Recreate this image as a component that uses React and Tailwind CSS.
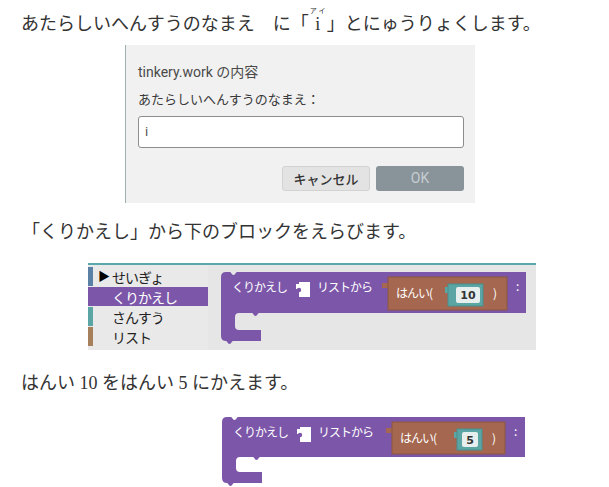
import React from 'react'

const jp = "font-['Noto_Sans_CJK_JP','Noto_Sans',sans-serif]"

// Blockly "くりかえし ... リストから はんい( n ) :" block, drawn as svg
const BLOCK_A = { W: 305, H1: 41, M: 17, A: 11, tab: 161, bx: 167, bw: 119, tx: 227, tw: 35, fx: 235, fw: 24, px: 272, cx: 295, num: '10' }
const BLOCK_B = { W: 303, H1: 40, M: 15, A: 11, tab: 164, bx: 170, bw: 113, tx: 235, tw: 25, fx: 240, fw: 16, px: 270, cx: 292, num: '5' }

function LoopBlock({ g }) {
  const { W, H1, M, A } = g
  const B = H1 + M + A
  const S = 14
  const d = `M0,5 Q0,0 5,0 H9 C10.5,0 10.5,3 12.5,3 C14.5,3 14.5,0 16,0 H${W} V${H1} H38 C36.5,${H1} 36.5,${H1 + 3} 34.5,${H1 + 3} C32.5,${H1 + 3} 32.5,${H1} 31,${H1} H${S + 4} Q${S},${H1} ${S},${H1 + 4} V${H1 + M - 4} Q${S},${H1 + M} ${S + 4},${H1 + M} H40 V${B} H12 C10.5,${B} 10.5,${B + 3} 8.5,${B + 3} C6.5,${B + 3} 6.5,${B} 5,${B} Q0,${B} 0,${B - 5} Z`
  const by = 5
  const bh = H1 - 8
  const ty = by + 7
  const th = bh - 11
  return (
    <svg width={W + 2} height={B + 4} className="block">
      <path d={d} fill="#7c57a9" />
      <text x="11" y="20" className={`${jp} fill-white text-[12px] tracking-[-1px]`}>くりかえし</text>
      {/* empty variable slot */}
      <rect x="78" y="10" width="11" height="15" fill="#fff" />
      <rect x="75" y="12" width="3" height="5" fill="#fff" />
      <circle cx="78" cy="18" r="2.2" fill="#7c57a9" />
      <text x="96" y="20" className={`${jp} fill-white text-[12px] tracking-[-1px]`}>リストから</text>
      {/* はんい block */}
      <rect x={g.tab} y="11" width={g.bx - g.tab} height="5" fill="#a5674f" />
      <rect x={g.bx} y={by} width={g.bw} height={bh} fill="#a5674f" stroke="#8c5641" strokeWidth="1" />
      <text x={g.bx + 8} y={by + 21} className={`${jp} fill-white text-[12px] tracking-[-1px]`}>はんい(</text>
      <rect x={g.tx - 3} y={ty + 3} width="3" height="6" fill="#5ba5a5" />
      <rect x={g.tx} y={ty} width={g.tw} height={th} fill="#5ba5a5" stroke="#4b9090" strokeWidth="1" />
      <rect x={g.fx} y={ty + 3} width={g.fw} height={th - 6} rx="2" fill="#e6eeee" />
      <text x={g.fx + g.fw / 2} y={ty + th / 2 + 4} textAnchor="middle" className="font-['DejaVu_Sans',sans-serif] font-bold fill-[#333] text-[11px]">{g.num}</text>
      <text x={g.px} y={by + 21} className={`${jp} fill-white text-[12px]`}>)</text>
      <text x={g.cx} y="19" className={`${jp} fill-white text-[12px]`}>:</text>
    </svg>
  )
}

function PromptDialog() {
  return (
    <div className="ml-[125px] w-[350px] h-[158px] bg-[#f1f1f1] border-l border-[#9fb0b0] pl-[12px] pr-[11px] pt-[18px] font-['Roboto','Noto_Sans_CJK_JP',sans-serif]">
      <div className="text-[14px] leading-[18px] text-[#4a4a4a]">tinkery.work の内容</div>
      <div className={`${jp} mt-[9px] text-[13px] leading-[18px] text-[#3a3a3a]`}>あたらしいへんすうのなまえ：</div>
      <div className="mt-[8px] h-[32px] bg-white border border-[#8d8d8d] rounded-[3px] flex items-center px-[6px] text-[13px] text-[#555]">i</div>
      <div className="mt-[18px] flex justify-end gap-[6px]">
        <div className={`${jp} w-[88px] h-[25px] rounded-[3px] bg-[#e3e3e3] border border-[#d2d2d2] flex items-center justify-center text-[13px] font-medium text-[#333]`}>キャンセル</div>
        <div className="w-[88px] h-[25px] rounded-[3px] bg-[#89949a] flex items-center justify-center text-[14px] text-[#c6cdd1]">OK</div>
      </div>
    </div>
  )
}

const CATS = [
  { label: 'せいぎょ', color: '#5b80a5', arrow: true },
  { label: 'くりかえし', color: '#7c57a9', selected: true },
  { label: 'さんすう', color: '#5ba5a5' },
  { label: 'リスト', color: '#a5805b' },
]

function BlockPalette() {
  return (
    <div className="ml-[88px] w-[448px] h-[87px] border-t-2 border-[#5aa7ad] flex bg-[#e6e6e6]">
      <div className="w-[120px] bg-[#e9e9e9] pt-[2px] flex flex-col gap-[1px]">
        {CATS.map((c) => (
          <div
            key={c.label}
            className={`h-[19px] flex items-center ${c.selected ? 'bg-[#7c57a9] text-white' : 'text-[#222]'}`}
          >
            <div className="w-[5px] h-full" style={{ background: c.color }} />
            <span className="w-[19px] pl-[5px] text-[12px] leading-none text-black">{c.arrow ? '▶' : ''}</span>
            <span className={`${jp} text-[14px] tracking-[-1px] leading-none`}>{c.label}</span>
          </div>
        ))}
      </div>
      <div className="flex-1 pl-[13px] pt-[7px]">
        <LoopBlock g={BLOCK_A} />
      </div>
    </div>
  )
}

export default function App() {
  return (
    <div className="w-[609px] h-[487px] bg-white overflow-hidden text-[#333] font-['Liberation_Serif','Noto_Sans_CJK_JP',serif]">
      <p className="h-[45px] pt-[14px] pl-[21px] text-[18px] leading-[20px]">
        あたらしいへんすうのなまえ　に「
        <ruby>
          <span className="inline-block w-[18px] text-center">i</span>
          <rt className={`${jp} text-[7px] leading-none`}>アイ</rt>
        </ruby>
        」とにゅうりょくします。
      </p>
      <PromptDialog />
      <p className="mt-[19px] pl-[22px] text-[18px] leading-[20px]">「くりかえし」から下のブロックをえらびます。</p>
      <div className="mt-[21px]">
        <BlockPalette />
      </div>
      <p className="mt-[23px] pl-[21px] text-[18px] leading-[20px]">はんい 10 をはんい 5 にかえます。</p>
      <div className="mt-[24px] ml-[222px]">
        <LoopBlock g={BLOCK_B} />
      </div>
    </div>
  )
}
